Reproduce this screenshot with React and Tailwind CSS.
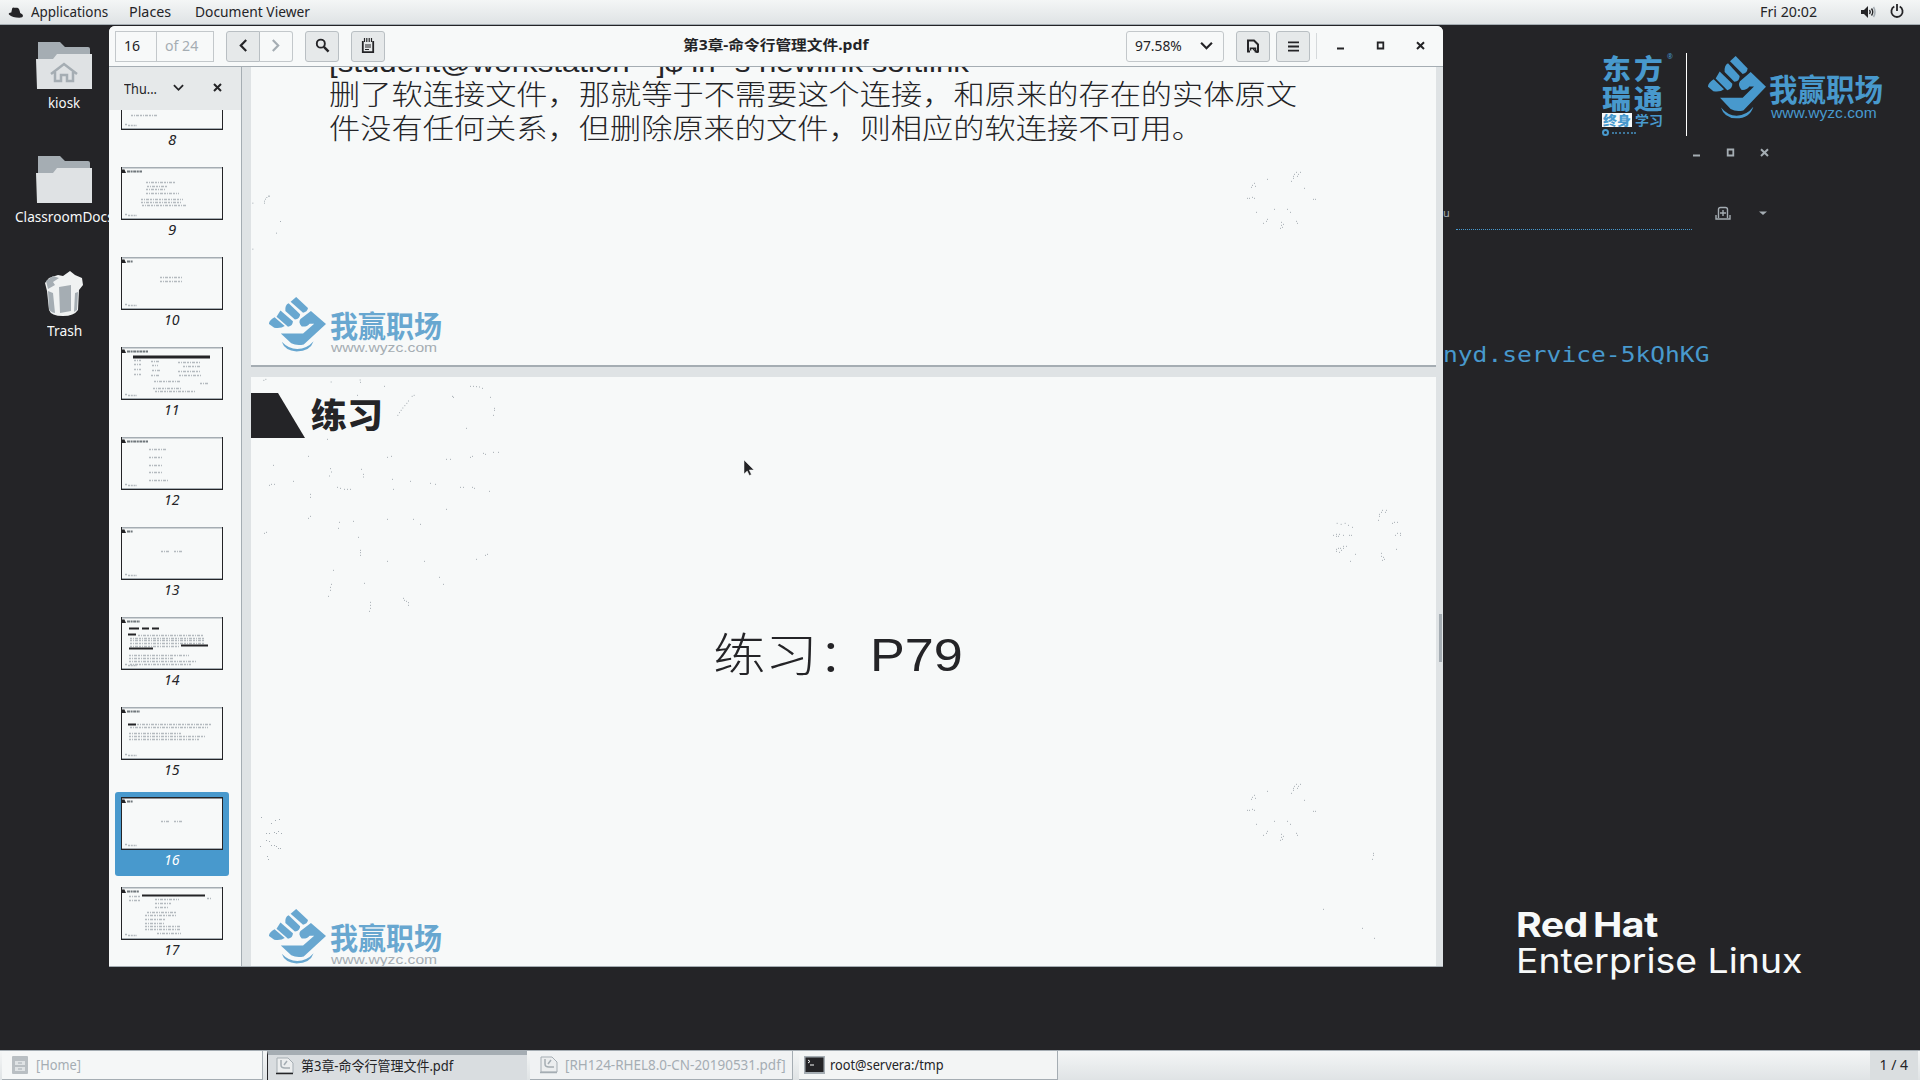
import { useLayoutEffect, useRef, useState } from "react";

/* A single line of text whose run is scaled horizontally to a given width. */
function Fit({ w, className = "", children }) {
  const ref = useRef(null);
  const [s, setS] = useState(1);
  useLayoutEffect(() => {
    if (ref.current && ref.current.offsetWidth) setS(w / ref.current.offsetWidth);
  }, [w]);
  return (
    <div className="block shrink-0 whitespace-pre text-left" style={{ width: w }}>
      <div ref={ref} className={"block w-fit origin-left " + className} style={{ transform: `scaleX(${s})` }}>
        {children}
      </div>
    </div>
  );
}

function FistMark({ className }) {
  return (
    <svg viewBox="924 168 174 190" preserveAspectRatio="none" className={className} fill="currentColor">
      <path d="M1007 168 L1043 206 Q1041 220 1028 222 L990 184 Z" />
      <path d="M984 190 L1019 228 Q1019 244 1003 246 L974 216 Q972 196 984 190 Z" />
      <path d="M959 215 L997 252 Q997 268 982 271 L947 236 Z" />
      <path d="M941 238 L972 268 Q962 277 940 274 L924 261 Q923 250 941 238 Z" />
      <path d="M1052 216 L1098 261 L1030 332 Q1008 337 992 328 L960 294 L1028 294 L1062 260 L1048 260 Q1040 272 1024 270 Q1012 255 1020 244 Z" />
      <path d="M963 323 Q984 348 1010 348 Q1040 347 1060 321 Q1050 356 1008 356 Q972 354 963 323 Z" />
    </svg>
  );
}

function PageLogo() {
  return (
    <div className="flex h-[60px] w-[180px] text-[#68a7d0]">
      <FistMark className="h-[55px] w-[57px] shrink-0" />
      <div className="ml-[4px] mt-[10px] flex flex-col">
        <Fit w={112} className="font-['Noto_Sans_CJK_SC',sans-serif] text-[30px] font-bold leading-[34px]">我赢职场</Fit>
        <Fit w={106} className="ml-[1px] font-['Liberation_Sans',sans-serif] text-[13px] leading-[13px] text-[#a5adb3]">www.wyzc.com</Fit>
      </div>
    </div>
  );
}

function Folder({ home }) {
  return (
    <svg viewBox="0 0 56 48" className="h-[48px] w-[56px]">
      <path d="M2 1h22l5 5h23q2 0 2 2v38H2z" fill="#a5adb3" />
      <path d="M0 18h17l4-5h35v35H1z" fill="#dfe2e4" />
      {home && <path d="M15 33 28 23 41 33M19 31v9h6v-6h6v6h6v-9" fill="none" stroke="#a5adb3" strokeWidth="2.5" />}
    </svg>
  );
}

function Trash() {
  return (
    <svg viewBox="0 0 40 46" className="h-[46px] w-[40px]">
      <path d="M1 12 5 7l9-3 5 1 7-5 5 4 7 3 1 7-4 5-1 20q-4 6-15 6-12 0-14-6L3 20z" fill="#f0f2f2" />
      <path d="M2 10 9 5l6 2-6 4 2 3-7 4zM4 20l5 2 2 20q-5-1-6-4z" fill="#a5adb3" />
      <path d="M15 16 27 14v26l-11 2zM31 22l3-1-1 18-3 2z" fill="#a5adb3" />
    </svg>
  );
}

function DesktopIcon({ children, label, w }) {
  return (
    <div className="flex w-[128px] flex-col items-center">
      {children}
      <Fit w={w} className="mt-[3px] text-[15px] leading-5 text-[#f7f9f9]">{label}</Fit>
    </div>
  );
}

/* Thumbnail contents: s = faint text runs, b = dark runs, as [x1, x2, y] */
const head = (n) => [[6, n, 4]];
const THUMBS = [
  { n: 8, s: [[10, 36, 38]], b: [] },
  { n: 9, s: [[25, 54, 15], [26, 46, 19], [25, 44, 22], [25, 58, 26], [20, 62, 32], [20, 61, 35], [21, 65, 38]], b: head(21) },
  { n: 10, s: [[39, 61, 20], [39, 61, 24]], b: head(12) },
  { n: 11, s: [[13, 20, 13], [30, 38, 14], [57, 80, 15], [13, 20, 17], [31, 37, 18], [62, 80, 19], [13, 20, 22], [31, 39, 23], [57, 79, 24], [13, 20, 27], [30, 39, 28], [58, 80, 28], [33, 60, 34], [79, 87, 36], [32, 60, 41], [34, 75, 44]], b: [...head(27), [12, 89, 9], [12, 89, 10]] },
  { n: 12, s: [[28, 46, 12], [28, 42, 20], [28, 42, 28], [28, 42, 35], [28, 47, 43]], b: head(27) },
  { n: 13, s: [[40, 48, 24], [53, 61, 24]], b: head(12) },
  { n: 14, s: [[17, 82, 18], [9, 84, 21], [9, 84, 23], [9, 84, 26], [9, 58, 29], [8, 68, 38], [8, 53, 41], [8, 76, 44], [9, 70, 47]], b: [...head(19), [8, 18, 11], [21, 28, 11], [31, 38, 11], [7, 15, 17], [60, 87, 28], [8, 32, 31]] },
  { n: 15, s: [[16, 91, 17], [9, 87, 20], [8, 60, 26], [8, 85, 29], [8, 78, 32]], b: [...head(19), [7, 15, 17]] },
  { n: 16, s: [[40, 48, 24], [53, 61, 24]], b: head(12), active: true },
  { n: 17, s: [[8, 19, 9], [86, 91, 11], [8, 19, 13], [34, 58, 12], [34, 50, 16], [34, 47, 20], [26, 56, 25], [24, 55, 28], [24, 44, 32], [24, 43, 36], [24, 60, 39], [24, 60, 42], [36, 60, 46]], b: [...head(18), [21, 84, 8]] },
];

function Thumb({ t }) {
  return (
    <div className={"flex h-[84px] w-[114px] shrink-0 flex-col items-center rounded-[3px] pt-[5px] " + (t.active ? "bg-[#4899cd] text-white" : "text-[#242427]")}>
      <svg viewBox="0 0 102 53" className="h-[53px] w-[102px] shrink-0">
        <rect width="102" height="53" fill="#242427" />
        <rect x="1" y="0" width="100" height="2" fill={t.active ? "#242427" : "#a5adb3"} />
        <rect x="1" y="1.5" width="100" height="50.5" fill="#f7f9f9" />
        <rect x="1" y="51" width="100" height="1" fill="#a5adb3" />
        <path d="M1 2.500h2.500l1.500 3.500H1z" fill="#242427" />
        {t.s.map(([a, b, y], i) => (
          <path key={i} d={`M${a} ${y + 0.5}H${b}`} stroke="#b4babf" strokeWidth="1.6" strokeDasharray="2 1 1 1 3 1" />
        ))}
        {t.b.map(([a, b, y], i) => (
          <path key={i} d={`M${a} ${y + 0.5}H${b}`} stroke={i ? "#242427" : "#6f767b"} strokeWidth="2" strokeDasharray={i ? "none" : "3 .6 2 .6"} />
        ))}
        <path d="M4 47.5h2M7 48.5h9" stroke="#b4babf" strokeWidth="1.6" strokeDasharray="2 .8" />
      </svg>
      <Fit w={t.n > 9 ? 16 : 8} className="text-[15px] italic leading-[18px]">{t.n}</Fit>
    </div>
  );
}

const btn = "flex h-[31px] items-center justify-center border border-[#b9bfc3] bg-[#e6e9ea] text-[#242427]";
const Chevron = ({ d, className }) => (
  <svg viewBox="0 0 12 12" className={className} fill="none" stroke="currentColor" strokeWidth="2"><path d={d} /></svg>
);

function WinControls({ className, gap }) {
  return (
    <div className={"flex items-center " + className}>
      <svg viewBox="0 0 9 9" className="size-[9px]"><path d="M1 7.5h7" stroke="currentColor" strokeWidth="2" /></svg>
      <svg viewBox="0 0 9 9" className={"size-[9px] " + gap}><path d="M1.7 1.5h5.6v6H1.7z" fill="none" stroke="currentColor" strokeWidth="1.8" /></svg>
      <svg viewBox="0 0 9 9" className={"size-[9px] " + gap}><path d="M1 1.2 8 8M8 1.2 1 8" stroke="currentColor" strokeWidth="2" /></svg>
    </div>
  );
}

function HeaderBar() {
  return (
    <header className="flex h-[41px] shrink-0 items-center border-b border-[#a5adb3] bg-[#f7f9f9] pl-[6px] text-[15px] leading-[20px] text-[#242427]">
      <div className="flex h-[31px] w-[99px] items-center border border-[#c3c8cb]">
        <div className="flex h-full w-[41px] items-center border-r border-[#c3c8cb] pb-[2px] pl-[8px]"><Fit w={16}>16</Fit></div>
        <div className="pb-[2px] pl-[8px] text-[#a5adb3]"><Fit w={33}>of 24</Fit></div>
      </div>
      <div className="ml-[12px] flex">
        <div className={btn + " w-[34px] rounded-l-[3px] pb-[1px]"}><Chevron d="M8.5 1 3.5 6l5 5" className="size-[13px]" /></div>
        <div className="flex h-[31px] w-[33px] items-center justify-center rounded-r-[3px] border border-l-0 border-[#c3c8cb] pb-[1px] pr-[2px] text-[#a5adb3]"><Chevron d="M3.5 1l5 5-5 5" className="size-[13px]" /></div>
      </div>
      <div className={btn + " ml-[12px] w-[34px] rounded-[3px] pb-[1px]"}>
        <svg viewBox="0 0 16 16" className="size-[15px]" fill="none" stroke="currentColor"><circle cx="6.2" cy="6" r="4.3" strokeWidth="2" /><path d="m9.5 9.5 5 5" strokeWidth="2.6" /></svg>
      </div>
      <div className={btn + " ml-[12px] w-[34px] rounded-[3px] pb-[1px]"}>
        <svg viewBox="0 0 14 16" className="h-[16px] w-[14px]" fill="none" stroke="currentColor"><path d="M1.8 3v11.2h10.4V3" strokeWidth="1.8" /><path d="M3.5 0v4M5.8 0v4M8.2 0v4M10.5 0v4" strokeWidth="1.2" /><path d="M4 7h6M4 9h6M4 11.5h4" strokeWidth="1.1" /></svg>
      </div>
      <div className="ml-[298px] pb-[2px]"><Fit w={186} className="font-['Noto_Sans','Noto_Sans_CJK_SC',sans-serif] text-[14px] font-bold">第3章-命令行管理文件.pdf</Fit></div>
      <div className="ml-[257px] flex h-[31px] w-[98px] items-center rounded-[3px] border border-[#c3c8cb] pb-[2px] pl-[8px]">
        <Fit w={47}>97.58%</Fit>
        <Chevron d="M1 3.5l5 5 5-5" className="ml-[18px] size-[13px]" />
      </div>
      <div className={btn + " ml-[12px] w-[34px] rounded-[3px]"}>
        <svg viewBox="0 0 14 14" className="size-[14px]" fill="none" stroke="currentColor" strokeWidth="2"><path d="M4 12.5H2V1.5h6l4 4v7h-2" /><path d="M4.500 11.500V9.300h5v4.200" strokeWidth="1.6" /><path d="m7 10 5 4" strokeWidth="1.5" /></svg>
      </div>
      <div className={btn + " ml-[6px] w-[34px] rounded-[3px]"}>
        <svg viewBox="0 0 12 12" className="size-[11px]" stroke="currentColor" strokeWidth="2"><path d="M0 1.500h12M0 6h12M0 10.500h12" /></svg>
      </div>
      <span className="ml-[6px] h-[26px] w-px bg-[#d5d9db]" />
      <WinControls className="ml-[19px] pb-[1px]" gap="ml-[31px]" />
    </header>
  );
}

/* Faint firework decorations on slide pages, as dot positions */
const SPARK_TOP_LEFT = [[101, 301], [107, 298], [303, 306], [390, 300], [391, 307], [463, 319], [382, 346], [721, 319], [730, 319], [739, 320], [748, 321], [757, 325], [552, 346], [546, 349], [535, 363], [530, 370], [524, 377], [518, 384], [513, 391], [508, 398], [503, 406], [667, 349], [670, 352], [781, 352], [793, 385], [793, 391], [790, 406], [709, 445], [292, 478], [235, 529], [472, 532], [484, 529], [649, 538], [661, 538], [721, 532], [727, 529], [760, 520], [766, 523], [790, 517], [805, 517], [130, 556], [301, 566], [304, 576], [298, 588], [394, 568], [400, 583], [400, 591], [190, 604], [118, 616], [124, 613], [133, 613], [322, 622], [331, 625], [343, 628], [352, 628], [361, 628], [487, 598], [541, 604], [490, 628], [601, 610], [616, 613], [691, 622], [700, 622], [727, 622], [733, 625], [778, 634], [241, 643], [241, 652], [649, 688], [241, 709], [235, 715], [328, 727], [325, 745], [370, 724], [472, 718], [550, 718], [571, 733], [103, 760], [109, 757], [385, 772], [391, 811], [391, 818], [391, 826], [772, 823], [766, 826], [739, 838], [472, 844], [583, 844], [310, 871], [628, 892], [403, 910], [640, 913], [304, 913], [301, 922], [301, 931], [295, 949], [520, 955], [523, 961], [529, 964], [535, 968], [535, 976], [421, 967], [421, 976], [421, 985], [418, 994]];
const SPARK_RIGHT = [[411, 130], [423, 133], [435, 130], [445, 136], [457, 142], [400, 166], [409, 163], [409, 169], [415, 169], [418, 163], [430, 166], [448, 166], [454, 166], [409, 208], [409, 214], [415, 205], [418, 217], [421, 205], [424, 211], [430, 199], [430, 205], [439, 199], [466, 223], [451, 244], [547, 91], [559, 91], [556, 97], [544, 97], [538, 103], [538, 109], [535, 121], [577, 130], [583, 127], [592, 127], [586, 166], [592, 160], [601, 160], [601, 166], [589, 208], [544, 220], [544, 229], [550, 232], [553, 238], [547, 241], [289, 913], [301, 913], [295, 919], [292, 925], [283, 919], [280, 925], [280, 931], [274, 940], [202, 934], [163, 946], [157, 952], [166, 955], [154, 958], [142, 991], [148, 991], [157, 988], [163, 991], [313, 961], [340, 994], [346, 994], [169, 1033], [223, 1024], [262, 1024], [271, 1033], [202, 1054], [199, 1060], [190, 1066], [244, 1063], [250, 1069], [244, 1072], [247, 1078], [241, 1081], [289, 1060], [292, 1066], [520, 1120], [520, 1126], [517, 1138], [370, 1288], [487, 1345], [523, 1375]];
const SPARK_LEFT = [[484, 952], [514, 970], [526, 961], [538, 958], [499, 1000], [508, 1000], [523, 997], [529, 1000], [535, 994], [544, 1000], [499, 1021], [508, 1024], [481, 1039], [514, 1036], [523, 1036], [529, 1039], [535, 1045], [541, 1045], [502, 1069], [505, 1078]];
const SPARK_CORNER = [[493, 430], [493, 424], [496, 418], [500, 413], [505, 409], [508, 409], [541, 485], [529, 520], [458, 430], [458, 568]];

function Sparks({ pts, box, className }) {
  return (
    <svg viewBox={box} className={"absolute " + className}>
      <path d={pts.map(([x, y]) => `M${x - 1} ${y}h3`).join("")} stroke="#a5adb3" strokeWidth="3" />
    </svg>
  );
}

function Viewer() {
  return (
    <section className="absolute left-[109px] top-[26px] flex h-[941px] w-[1334px] flex-col overflow-hidden rounded-t-[6px] bg-[#f7f9f9]">
      <HeaderBar />
      <div className="flex min-h-0 flex-1 border-b border-[#a5adb3]">
        <aside className="flex w-[133px] shrink-0 flex-col border-r border-[#a5adb3]">
          <div className="flex h-[43px] shrink-0 items-center bg-[#e6e9ea] pb-[2px] pl-[15px] text-[15px] leading-[20px] text-[#242427]">
            <Fit w={33}>Thu...</Fit>
            <Chevron d="M1 3.500l5 5 5-5" className="ml-[16px] size-[11px]" />
            <svg viewBox="0 0 9 9" className="ml-[29px] size-[9px]"><path d="M1 1 8 8M8 1 1 8" stroke="currentColor" strokeWidth="2" /></svg>
          </div>
          <div className="min-h-0 flex-1 overflow-hidden pl-[6px]">
            <div className="mt-[-38px] flex flex-col gap-[6px]">
              {THUMBS.map((t) => <Thumb key={t.n} t={t} />)}
            </div>
          </div>
        </aside>
        <main className="flex min-w-0 flex-1 flex-col overflow-hidden bg-[#dfe3e5] pl-[9px]">
          <div className="relative h-[300px] w-[1185px] shrink-0 overflow-hidden border-b-2 border-[#a5adb3] bg-[#f7f9f9] pl-[78px] text-[28px] text-[#242427]">
            <div className="mt-[-18px] flex flex-col">
              <Fit w={640} className="font-['Liberation_Sans',sans-serif] text-[28px] leading-[27px]">[student@workstation ~]$ ln -s newlink softlink</Fit>
              <Fit w={968} className="font-['Noto_Sans_CJK_SC',sans-serif] font-light leading-[34px]">删了软连接文件，那就等于不需要这个连接，和原来的存在的实体原文</Fit>
              <Fit w={874} className="font-['Noto_Sans_CJK_SC',sans-serif] font-light leading-[34px]">件没有任何关系，但删除原来的文件，则相应的软连接不可用。</Fit>
            </div>
            <div className="ml-[-60px] mt-[153px]"><PageLogo /></div>
            <Sparks pts={SPARK_RIGHT.filter(([, y]) => y < 1090)} box="0 0 690 1440" className="left-[949px] top-[-199px] h-[480px] w-[230px]" />
            <Sparks pts={SPARK_CORNER} box="453 400 300 200" className="left-0 top-[126px] h-[67px] w-[100px]" />
          </div>
          <div className="relative mt-[10px] h-[589px] w-[1185px] shrink-0 overflow-hidden bg-[#f7f9f9] text-[#242427]">
            <div className="mt-[14px] flex h-[50px] items-center">
              <svg viewBox="0 0 54 45" className="mb-[1px] h-[45px] w-[54px]"><path d="M0 0h27l27 45H0z" fill="#242427" /></svg>
              <div className="ml-[6px] mb-[4px]"><Fit w={72} className="font-['Noto_Sans_CJK_SC',sans-serif] text-[34px] font-black leading-[44px]">练习</Fit></div>
            </div>
            <div className="mt-[176px] flex h-[72px] items-baseline pl-[462px]">
              <Fit w={157} className="font-['Noto_Sans_CJK_SC',sans-serif] text-[46px] font-light leading-[68px]">练习：</Fit>
              <Fit w={93} className="font-['Liberation_Sans',sans-serif] text-[46px] leading-[68px]">P79</Fit>
            </div>
            <div className="ml-[18px] mt-[220px]"><PageLogo /></div>
            <Sparks pts={SPARK_TOP_LEFT} box="63 291 900 729" className="left-0 top-0 h-[243px] w-[300px]" />
            <Sparks pts={SPARK_RIGHT} box="0 0 690 1440" className="left-[949px] top-[103px] h-[480px] w-[230px]" />
            <Sparks pts={SPARK_LEFT} box="453 900 300 200" className="left-0 top-[423px] h-[67px] w-[100px]" />
          </div>
        </main>
      </div>
      <span className="absolute right-[1px] top-[588px] h-[48px] w-[3px] bg-[#a5adb3]" />
      <svg viewBox="0 0 12 18" className="absolute left-[634px] top-[433px] h-[18px] w-[12px]"><path d="M1 1v14l3.200-3 2.200 4.500 2-1L6.300 11H11z" fill="#242427" stroke="#f7f9f9" strokeWidth=".5" /></svg>
    </section>
  );
}

/* Parts of the terminal window that show through to the right of the viewer */
function Terminal() {
  return (
    <section className="absolute left-[1437px] top-[140px] flex h-[250px] w-[345px] flex-col overflow-hidden text-[#a5adb3]">
      <WinControls className="ml-[255px] mt-[8px] h-[9px]" gap="ml-[25px]" />
      <div className="mt-[47px] flex h-[18px] items-center">
        <span className="ml-[6px] text-[11px] leading-[14px]">u</span>
        <svg viewBox="0 0 16 14" className="ml-[265px] h-[14px] w-[16px]" fill="none" stroke="currentColor" strokeWidth="1.4"><path d="M1 9v4h14V9M3.500 12V3.500q0-2 2-2h5q2 0 2 2V12M8 4v6M5 7h6" /></svg>
        <svg viewBox="0 0 8 4" className="ml-[28px] h-[4px] w-[8px]"><path d="M0 .5h8L4 4z" fill="currentColor" /></svg>
      </div>
      <div className="ml-[19px] mt-[7px] w-[236px] border-t border-dotted border-[#4899cd]" />
      <div className="ml-[6px] mt-[107px]"><Fit w={266} className="font-['DejaVu_Sans_Mono',monospace] text-[22px] leading-[36px] text-[#4899cd]">nyd.service-5kQhKG</Fit></div>
    </section>
  );
}

function BrandLogos() {
  const cjk = "font-['Noto_Sans_CJK_SC',sans-serif] ";
  return (
    <div className="absolute left-[1602px] top-[53px] flex h-[84px] text-[#4899cd]">
      <div className="relative flex w-[62px] flex-col">
        <Fit w={64} className={cjk + "text-[27px] font-black leading-[30px] tracking-[3px]"}>东方</Fit>
        <Fit w={64} className={cjk + "text-[27px] font-black leading-[30px] tracking-[3px]"}>瑞通</Fit>
        <div className="flex h-[14px] items-center gap-[3px]">
          <div className="flex h-[14px] w-[30px] items-center justify-center bg-[#f7f9f9]"><Fit w={28} className={cjk + "text-[13px] font-black leading-[14px]"}>终身</Fit></div>
          <Fit w={28} className={cjk + "text-[13px] font-bold leading-[14px]"}>学习</Fit>
        </div>
        <div className="mt-[2px] flex items-center gap-[3px]">
          <span className="size-[7px] rounded-full border-2 border-[#4899cd]" />
          <span className="w-[24px] border-t-2 border-dotted border-[#4899cd] opacity-70" />
        </div>
        <span className="absolute left-[65px] top-0 text-[7px] leading-[7px]">®</span>
      </div>
      <span className="ml-[22px] h-[83px] w-px bg-white" />
      <FistMark className="ml-[21px] mt-[3px] h-[63px] w-[58px]" />
      <div className="ml-[3px] mt-[16px] flex flex-col">
        <Fit w={114} className={cjk + "text-[31px] font-bold leading-[37px]"}>我赢职场</Fit>
        <Fit w={106} className="ml-[2px] font-['Liberation_Sans',sans-serif] text-[15px] leading-[14px]">www.wyzc.com</Fit>
      </div>
    </div>
  );
}

function DocIcon({ dim }) {
  return (
    <svg viewBox="0 0 19 18" className="h-[18px] w-[19px]"><path d="M2 1h11l5 5v10H2z" fill="#eceeef" stroke="#a5adb3" /><path d="M6 3v5q0 3 4 3h5M9 8l3-4" fill="none" stroke="#a5adb3" strokeWidth="1.5" /><path d="M1 16.500h17" stroke={dim ? "#a5adb3" : "#242427"} strokeWidth="1.5" /></svg>
  );
}

export default function App() {
  return (
    <div className="relative flex h-[1080px] w-[1920px] flex-col overflow-hidden bg-[#242427] font-['Noto_Sans','Noto_Sans_CJK_SC',sans-serif]">
      <nav className="flex h-[25px] shrink-0 items-center border-b border-[#a5adb3] bg-gradient-to-b from-[#f4f6f6] to-[#dfe3e5] pl-[8px] text-[15px] leading-[20px] text-[#242427]">
        <svg viewBox="0 0 16 11" className="h-[11px] w-[15px]"><path d="M4.500 1Q5 0 6.500 .3L10 .5Q12 1 12.500 4L13 6q3 1 3 3 0 2-4 2Q5 11 1 7.500 0 6 3.500 5.500z" fill="#242427" /></svg>
        <div className="ml-[8px] pb-[3px]"><Fit w={77}>Applications</Fit></div>
        <div className="ml-[21px] pb-[3px]"><Fit w={42}>Places</Fit></div>
        <div className="ml-[24px] pb-[3px]"><Fit w={115}>Document Viewer</Fit></div>
        <div className="ml-auto pb-[3px]"><Fit w={57}>Fri 20:02</Fit></div>
        <svg viewBox="0 0 15 12" className="ml-[44px] mb-[1px] h-[12px] w-[15px]" fill="none" stroke="#242427"><path d="M0 4h3l4-4v12L3 8H0z" fill="#242427" stroke="none" /><path d="M8.500 4q1.500 2 0 4M10.500 2.500q2.500 3.500 0 7" strokeWidth="1.400" /><path d="M12.500 1q3 5 0 10" stroke="#a5adb3" strokeWidth="1.500" /></svg>
        <svg viewBox="0 0 14 14" className="ml-[14px] mr-[16px] mb-[2px] size-[14px]" fill="none" stroke="#242427" strokeWidth="1.800"><path d="M4.300 2.500a5.600 5.600 0 1 0 5.400 0M7 0v7" /></svg>
      </nav>

      <div className="flex flex-1 flex-col pt-[16px]">
        <div className="flex h-[114px] items-start"><DesktopIcon label="kiosk" w={32}><Folder home /></DesktopIcon></div>
        <div className="flex h-[115px] items-start"><DesktopIcon label="ClassroomDocs" w={99}><Folder /></DesktopIcon></div>
        <div className="flex items-start pt-[1px]"><DesktopIcon label="Trash" w={35}><Trash /></DesktopIcon></div>
      </div>

      <Terminal />
      <BrandLogos />
      <div className="absolute left-[1516px] top-[903px] flex flex-col font-['Inter',sans-serif] text-[34px] text-[#f7f9f9]">
        <Fit w={142} className="font-bold leading-[43px] tracking-[-0.5px] [word-spacing:-3px]">Red Hat</Fit>
        <Fit w={286} className="leading-[30px]">Enterprise Linux</Fit>
      </div>
      <Viewer />

      <footer className="flex h-[30px] shrink-0 items-stretch border-t border-[#a5adb3] bg-gradient-to-b from-[#f4f6f6] to-[#dfe3e5] pl-[2px] text-[14px] leading-[20px] text-[#242427]">
        <div className="flex w-[261px] items-center border-b border-r border-[#a5adb3] bg-[#f5f7f7] pl-[10px] text-[#a5adb3]">
          <svg viewBox="0 0 16 18" className="h-[18px] w-[16px]"><rect width="16" height="18" rx="1" fill="#b9bfc3" /><path d="M3 5h10v4H3zM3 11h10v4H3z" fill="#dfe3e5" /><path d="M6 7h4M6 13h4" stroke="#a5adb3" /></svg>
          <div className="ml-[8px]"><Fit w={45}>[Home]</Fit></div>
        </div>
        <div className="ml-[4px] flex w-[260px] items-center border-l border-t-4 border-l-[#242427] border-t-[#a5adb3] bg-[#d9dde0] pb-[3px] pl-[7px]">
          <DocIcon />
          <div className="ml-[7px]"><Fit w={152}>第3章-命令行管理文件.pdf</Fit></div>
        </div>
        <div className="ml-[3px] flex w-[263px] items-center border-b border-r border-[#a5adb3] bg-[#f0f2f3] pl-[9px] text-[#a5adb3]">
          <DocIcon dim />
          <div className="ml-[7px]"><Fit w={221}>[RH124-RHEL8.0-CN-20190531.pdf]</Fit></div>
        </div>
        <div className="ml-[6px] flex w-[259px] items-center border-b border-r border-[#a5adb3] bg-[#f3f5f5] pl-[5px]">
          <svg viewBox="0 0 21 18" className="h-[18px] w-[21px]"><rect width="21" height="18" fill="#a5adb3" /><rect x="1.500" y="1.500" width="18" height="14.500" fill="#242427" /><path d="m4 4 2 1.500L4 7M6 9h4" fill="none" stroke="#f7f9f9" /></svg>
          <div className="ml-[5px]"><Fit w={114}>root@servera:/tmp</Fit></div>
        </div>
        <div className="ml-auto mr-[2px] flex w-[48px] items-center justify-center bg-[#dadee0] pb-[2px]"><Fit w={29}>1 / 4</Fit></div>
      </footer>
    </div>
  );
}
